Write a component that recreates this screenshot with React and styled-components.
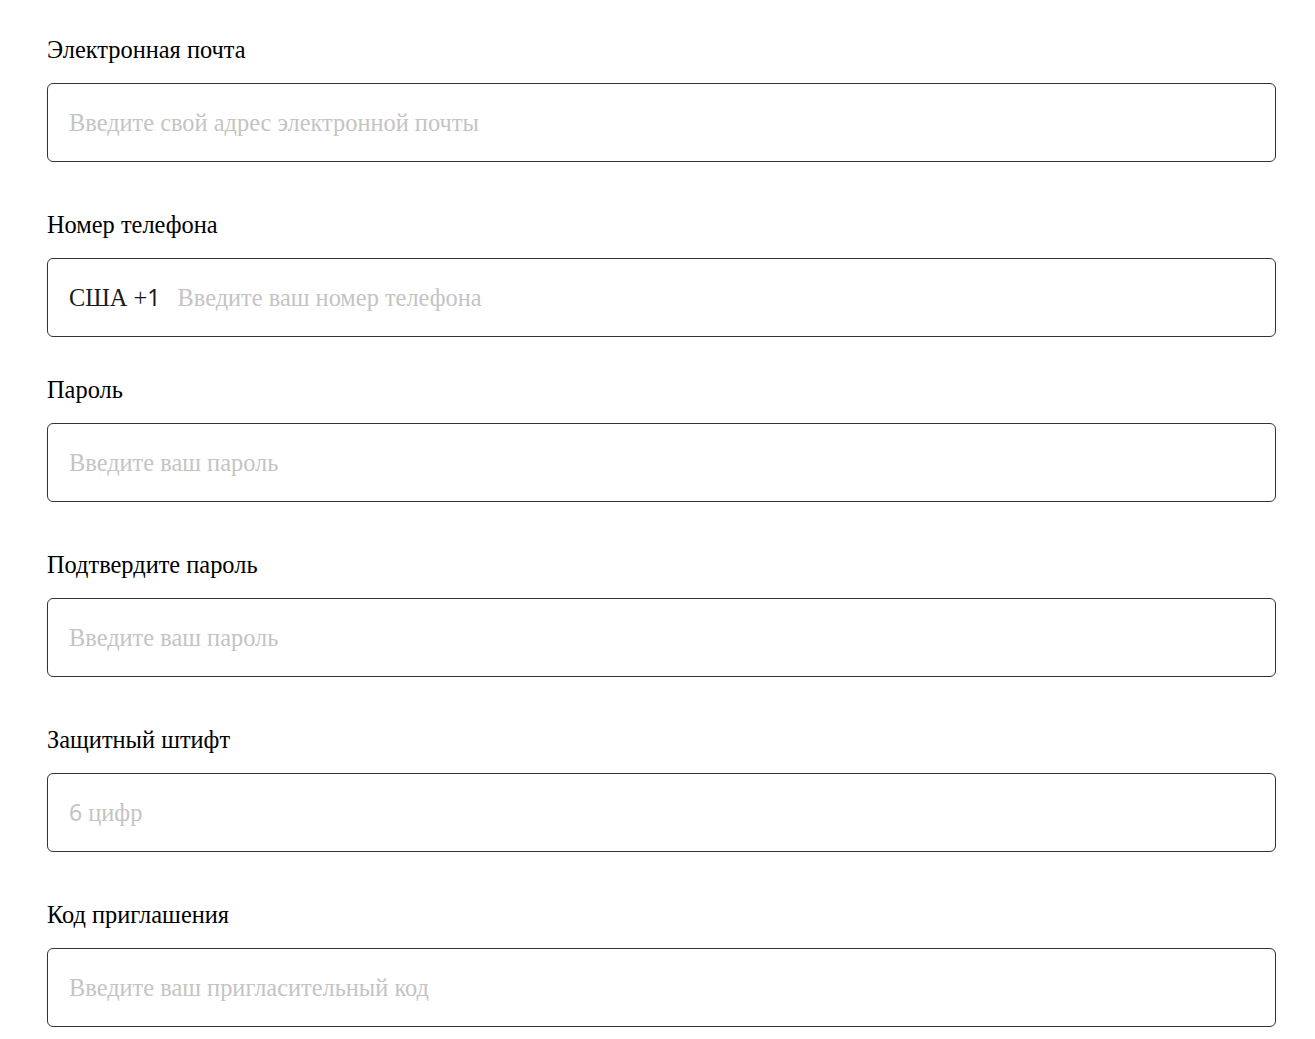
import React from "react";
import styled, { createGlobalStyle } from "styled-components";

const Global = createGlobalStyle`
  html, body { margin: 0; padding: 0; background: #fff; }
  body { font-family: "Liberation Serif", "Times New Roman", serif; color: #000; }
`;

const Form = styled.div`
  display: flex;
  flex-direction: column;
  padding: 36px 39px 40px 47px;
`;

const Field = styled.div`
  display: flex;
  flex-direction: column;
  margin-bottom: ${(p) => (p.$tight ? "39px" : "49px")};
`;

const Label = styled.label`
  font-size: 24.4px;
  line-height: 28px;
  margin-bottom: 19px;
`;

const Box = styled.div`
  display: flex;
  align-items: center;
  height: 79px;
  box-sizing: border-box;
  border: 1px solid #333;
  border-radius: 6px;
  padding: 0 21px;
  gap: 17px;
  font-size: 24.4px;
  line-height: 28px;
  white-space: nowrap;
`;

const Value = styled.span`
  color: #1a1a1a;
`;

const Hint = styled.span`
  color: #c4c4c4;
`;

const Digit = styled.span`
  font-family: "Noto Sans", "Open Sans", sans-serif;
  font-size: 23px;
`;

const fields = [
  { label: "Электронная почта", ph: ["Введите свой адрес электронной почты"] },
  { label: "Номер телефона", ph: ["Введите ваш номер телефона"], prefix: ["США +", <Digit key="d">1</Digit>], tight: true },
  { label: "Пароль", ph: ["Введите ваш пароль"] },
  { label: "Подтвердите пароль", ph: ["Введите ваш пароль"] },
  { label: "Защитный штифт", ph: [<Digit key="d">6</Digit>, " цифр"] },
  { label: "Код приглашения", ph: ["Введите ваш пригласительный код"] },
];

export default function App() {
  return (
    <>
      <Global />
      <Form>
        {fields.map((f, i) => (
          <Field key={i} $tight={f.tight}>
            <Label>{f.label}</Label>
            <Box>
              {f.prefix && <Value>{f.prefix}</Value>}
              <Hint>{f.ph}</Hint>
            </Box>
          </Field>
        ))}
      </Form>
    </>
  );
}
